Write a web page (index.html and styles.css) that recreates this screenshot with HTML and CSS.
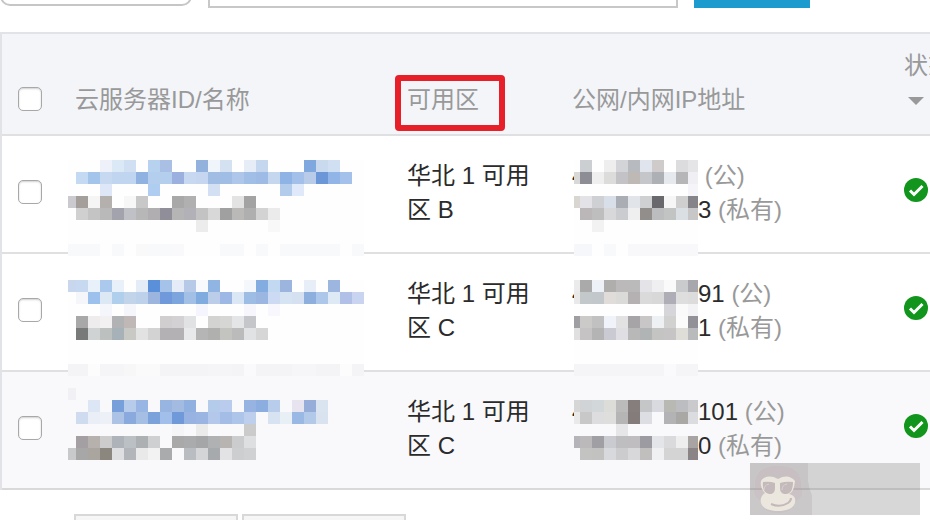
FILE: index.html
```html
<!DOCTYPE html>
<html lang="zh-CN">
<head>
    <meta charset="UTF-8">
    <title>云服务器</title>
    <link rel="stylesheet" href="styles.css">
</head>
<body>

<form class="toolbar">
    <select class="filter" aria-label="筛选"></select>
    <input class="search" type="text" aria-label="搜索">
    <button class="search-btn" type="button" aria-label="搜索"></button>
</form>

<div class="table-wrap">
    <table class="servers">
        <colgroup>
            <col class="col-check">
            <col class="col-name">
            <col class="col-zone">
            <col class="col-ip">
            <col>
        </colgroup>
        <thead>
            <tr>
                <th><input type="checkbox" aria-label="全选"></th>
                <th>云服务器ID/名称</th>
                <th>可用区<span class="highlight"></span></th>
                <th>公网/内网IP地址</th>
                <th>状态<span class="caret"></span></th>
            </tr>
        </thead>
        <tbody>
            <tr>
                <td><input type="checkbox" aria-label="选择"></td>
                <td><svg class="mosaic" data-mosaic="name1"></svg></td>
                <td>华北 1 可用区 B</td>
                <td>
                    <svg class="mosaic" data-mosaic="ip1"></svg>
                    <div><span class="masked">4</span> <span class="kind">(公)</span></div>
                    <div><span class="masked"></span>3 <span class="kind">(私有)</span></div>
                </td>
                <td><svg class="ok" viewBox="0 0 24 24"><circle cx="12" cy="12" r="12"/><path d="M6 12.5l4 4 8.500-8.500"/></svg></td>
            </tr>
            <tr>
                <td><input type="checkbox" aria-label="选择"></td>
                <td><svg class="mosaic" data-mosaic="name2"></svg></td>
                <td>华北 1 可用区 C</td>
                <td>
                    <svg class="mosaic" data-mosaic="ip2"></svg>
                    <div><span class="masked">4</span>91 <span class="kind">(公)</span></div>
                    <div><span class="masked"></span>1 <span class="kind">(私有)</span></div>
                </td>
                <td><svg class="ok" viewBox="0 0 24 24"><circle cx="12" cy="12" r="12"/><path d="M6 12.5l4 4 8.500-8.500"/></svg></td>
            </tr>
            <tr class="hover">
                <td><input type="checkbox" aria-label="选择"></td>
                <td><svg class="mosaic" data-mosaic="name3"></svg></td>
                <td>华北 1 可用区 C</td>
                <td>
                    <svg class="mosaic" data-mosaic="ip3"></svg>
                    <div><span class="masked">4</span>101 <span class="kind">(公)</span></div>
                    <div><span class="masked"></span>0 <span class="kind">(私有)</span></div>
                </td>
                <td><svg class="ok" viewBox="0 0 24 24"><circle cx="12" cy="12" r="12"/><path d="M6 12.5l4 4 8.500-8.500"/></svg></td>
            </tr>
        </tbody>
    </table>
</div>

<div class="actions">
    <button type="button" aria-label="操作一"></button>
    <button type="button" aria-label="操作二"></button>
</div>

<div class="watermark">
    <svg viewBox="0 0 62 52">
        <path class="wm-bg" d="M0 0h58v18q1 8 4 14v20H0z"/>
        <path class="wm-head" d="M5 24C5 8 14 3 28 3s24 5 23 21c3 6 0 12-5 14-3 8-8 12-18 12s-15-4-17-12c-6-3-8-9-6-14z"/>
        <path class="wm-face" d="M11 18c3-5 10-6 17-2 7-4 13-3 17 2l-1 6c-1 4-3 6-5 7 5 1 7 4 6 9-2 6-9 8-17 8s-15-2-17-8c-1-5 1-8 4-10-3-3-5-8-4-12z"/>
        <path class="wm-glass" d="M13 19q7-1 12 1v5c0 4-2 6-5 6-5 0-8-5-7-12zM30 20q6-2 13-1c0 7-2 12-7 12-4 0-6-2-6-6z"/>
        <path class="wm-glint" d="M14 27q0-5 5-6M32 27q0-5 5-6"/>
        <path class="wm-smile" d="M21 41q9 4 17-1 3-2 3-5"/>
    </svg>
</div>

<script src="mosaic.js"></script>
</body>
</html>
```
FILE: styles.css
```css
* {
    box-sizing: border-box;
}

html {
    overflow: hidden;
}

body {
    margin: 0;
    background-color: white;
    color: #2b2b2b;
    font: 24px/34px "Liberation Sans", Arial, "Noto Sans CJK SC", sans-serif;
}

/* search bar */
.toolbar {
    display: flex;
    align-items: flex-end;
    gap: 16px;
    height: 32px;
    padding: 0 0 24px;
}

.toolbar > * {
    flex: none;
    height: 56px;
}

.filter {
    width: 192px;
    margin-bottom: 2px;
    appearance: none;
    background-color: white;
    border: 2px solid #c6c6c6;
    border-radius: 10px;
}

.search {
    width: 470px;
    border: 2px solid #c8c8c8;
}

.search-btn {
    width: 116px;
    border: 0;
    background-color: #1b9bce;
}

/* server table */
.table-wrap {
    overflow: hidden;
}

.servers {
    width: 118%;
    table-layout: fixed;
    border-collapse: separate;
    border-spacing: 0;
    border-left: 2px solid #e2e3e6;
}

.col-check {
    width: 57px;
}

.col-name {
    width: 332px;
}

.col-zone {
    width: 165px;
}

.col-ip {
    width: 332px;
}

th, td {
    position: relative;
    padding: 23px 16px 25px;
    border-bottom: 2px solid #e0e0e3;
    text-align: left;
}

th {
    padding: 15px 16px 17px;
    border-top: 2px solid #e2e3e6;
    background-color: #f3f5f9;
    color: #999;
    font-weight: normal;
    vertical-align: bottom;
}

.hover td {
    background-color: #f9f9fb;
    border-color: #d9d9da;
}

.servers input {
    display: block;
    width: 24px;
    height: 24px;
    margin: 4px 0 6px;
    appearance: none;
    background-color: white;
    border: 1px solid #a8a8a8;
    border-radius: 5px;
    box-shadow: inset 0 1px 2px #d0d0d0;
}

.highlight {
    position: absolute;
    top: 41px;
    left: 4px;
    width: 110px;
    height: 56px;
    border: 6px solid #e71f29;
    border-radius: 4px;
}

.caret {
    display: block;
    width: 16px;
    height: 8px;
    margin: 14px 4px 12px;
    background-color: #999;
    clip-path: polygon(0 0, 100% 0, 50% 100%);
}

.kind {
    color: #999;
}

.masked {
    display: inline-block;
    width: 126px;
}

.mosaic {
    position: absolute;
    z-index: 1;
    shape-rendering: crispEdges;
}

.ok {
    display: block;
    width: 24px;
    height: 24px;
    margin-bottom: 6px;
}

.ok circle {
    fill: #12951c;
}

.ok path {
    fill: none;
    stroke: white;
    stroke-width: 3;
}

.actions {
    display: flex;
    gap: 4px;
    padding: 24px 74px 0;
}

.actions button {
    width: 164px;
    height: 48px;
    background-color: #f6f6f6;
    border: 2px solid #d8d8d8;
}

.watermark {
    position: fixed;
    z-index: 2;
    right: 10px;
    bottom: 5px;
    width: 170px;
    height: 52px;
    background-color: rgba(138, 138, 138, .34);
}

.watermark svg {
    display: block;
    width: 62px;
    height: 52px;
}

.wm-bg {
    fill: rgba(150, 135, 138, .18);
}

.wm-head {
    fill: rgba(190, 150, 155, .12);
}

.wm-face {
    fill: #ebe7de;
}

.wm-glass {
    fill: #c4babb;
}

.wm-smile, .wm-glint {
    fill: none;
    stroke: #c4b9b8;
    stroke-width: 2;
}

.wm-glint {
    stroke: #d8d0ce;
    stroke-width: 1;
}
```
FILE: mosaic.js
```js
// Pixelated blocks over private data. One string per 12px line, one colour per cell, "-" is empty.
const CELL = 12;

const mosaics = {
    name1: {top: 24, left: 9, cut: 4, width: 296, back: '#fefefe', rows: [
        '- - - eef1fa dbe8f5 d0dff2 - b6d2ef a9c0e4 - - 92b1dd f0f4fb d3e1f1 - e6edf7 c5d7ee - - - 7ea8de c9daee d0e0f2',
        '- c4daf2 a3c5ec c6d9f0 c0d5f0 c0d5f0 8fb2e0 b4cfee b4cfee 9bb0de c8d8f1 c6d6f0 a2bde3 9fbde5 adc6ea a0bee6 9dbbe4 c5d7ef 8fb3e4 a3c0ea b8cce9 6b97d8 90b5e6 a3c1ea',
        '- - - dee7f7 - - - afcdf0 - - - - d3dff2 - - - - - b4ccec dfe9f9',
        'cbcbcf a59f9c f6f5f6 b4b0ad - f7f7f7 c8c8c8 - - a8a8a8 b0b0b0 - - - e3e3e3 a3a3a3',
        '- d0d0d0 c4c4c5 b9b9b9 a2a3ad c0c1c7 b7b7b8 b0aeb0 908f99 b5b5b5 b1b1b7 c3c3c3 d8d8d8 a0a0a0 bab9b7 afafaf d3d3d3 ebebeb',
        '- - - - - - - - - - - ececec - - - - - f8f8f8',
        '-',
        'f7f9fa f7f9fa f7f9fa - f8f9fa - f9f9fa f8f9fa f8f9fa f9f9fb - - - f8f9fa f8f9fa - f8f9fa - f8f9fa f8f9fa f8f9fa f8f9fa f8f9fa - f8f9fa'
    ]},
    name2: {top: 26, left: 9, cut: 4, width: 296, back: '#fefefe', rows: [
        'c8d6ee c7d9f1 e8f1fa aac9ec e8f0f9 - e4edf7 5a90d9 a5c2e9 e5ecf8 b6c9e7 f7f9fd 90b5e3 - - f4f7fb 83ade1 c3d9f1 9bb5df - e8eef7 - 9db6e0',
        '- f5f6fa 9bc1ec dce9f4 b0cfec c1d4ea bed1ea 9bb5df 6f99da 7ca4dd a2c0e5 80abdf bccdea 9db8e4 dbe7f5 9ebde5 9cb6e2 cddaf3 d5e3f3 d5e0f1 8cafde adc7ea dee9f6 b0c0e7 c8d4f0',
        '- - - f5f6fc - f5f6fc - - - - - f5f6fd - - - f6f6fc - f7f7fd',
        '- a8a8a8 eeecec f2f0f1 b0b2b4 c0b8b6 - - d0cecf d3d1d3 e1e2e4 - d3d3d1 d6d7d5 e4e5e6 c4c6ca',
        '- 787979 cfd3d4 bcc0bf a6b1b8 c8c8c5 e1e2e1 d3d3d3 b3b1b3 b3b1b3 e8e9ea b5b5b5 b0b0ae c3c3c0 bbbbbb e0e2e4 d6d6d6',
        '-',
        '-',
        'f4f4f6 f4f4f6 fcfcfc f5f5f7 f5f5f7 f7f7f8 fafafb fafafb f4f4f6 f4f4f6 f4f4f6 f4f4f6 f5f5f7 f5f5f7 f4f4f6 fafafc f4f4f6 f4f4f6 f4f4f6 f6f6f8 f6f6f8 f4f4f6 f4f4f6 fcfcfc f4f4f6'
    ]},
    name3: {top: 16, left: 9, cut: 4, width: 296, back: '#f9f9fb', rows: [
        'f1f1f5',
        '- - dce6f4 - 779fda b7cbea 99b5e3 - 98b5e2 a4bbe1 90b0df - b5cbec bacced - 96b3e1 8baddf b8ccec - e7e4f0 96add9 dae4f1',
        '- cfdcf0 e9eef7 edf0f6 adc3e6 8aaadd a5bfe4 7ca2dc a2beea 6f99d9 98b3e1 9bb5e2 b3c8ea a4bde6 adc5e9 bdcfec - d8e3f2 e8eff5 9ab8e4 b3c9ea d9e3f0',
        '- - - - - - - - - f5f5f7 - ebebec - - - cbcbcc',
        '- a39fa2 b6b1ac cccccc adb3b9 bbc0c5 adb0b3 ced0d1 - a9a9a9 a9abac a4a6a8 b0b1b2 b8b4b2 cbccce dddfe1',
        'c8c9ca a8a7a8 aaa59e 8b867e dddfe1 b2b6ba e9e9ea f2f2f2 aaabad - b9bdc2 d3d5d7 a7aaac e3e3e5 ccced0 d0d1d2'
    ]},
    ip1: {top: 24, left: 18, cut: 6, width: 124, back: '#fefefe', rows: [
        '- cbcfd2 - eeeeef d3d4d7 b7bbbf e0e4ec cecbca - dcdcde e5e5e7',
        'd8d8d6 8d8e95 efefef dcdcdb c3c3c7 bfb9b5 c4c6ca adb0b5 e6eaee b6b6b8 efeff4',
        '- - - - - - - - - - f5f5f9',
        'd9d5d1 e2e2e7 cfd0d4 d9dfe9 abadb4 e1e5e9 cfd0d2 68686d f6f6f6 cfcfd0 858589',
        '- bbb7b8 bebebf d8d8da cbcccf efeff0 928e8b bbbdbf c1c4c3 d9dfe2 c7c7c8',
        '- - f2f2f3',
        '-',
        'f6f7fa f6f7fa - f8f9fa - f8f8fa f8f8fa f8f8fa f8f8fa f8f8fa f8f8fa'
    ]},
    ip2: {top: 26, left: 18, cut: 6, width: 124, back: '#fefefe', rows: [
        'ebebec aaaaaa eef2f8 b0aead bbb9b9 bababb e4e4e8 efeff1 fafafa c9cbcd a8a7ad',
        'e9e9e9 c3c8cb c2c7cb e0dcd9 dadad9 b5b1b3 dadadb d9d8d9 afaeb7 dedede dcdcdc',
        '- - - - - - - - d6d6da fafafa f3f3f5',
        '9f9fa3 cbcac9 c1c1c1 f0f3fa e2e2e3 a6a4a7 c9c6c7 eef1f4 d1d1d0 fbfbfb 929198',
        'e0e0e1 c5c3c3 b4b4b4 cacbd2 dedee3 b9b8b8 b1b4b4 c4c4c3 c6c4c5 dfddd8 b9babc',
        '-',
        '-',
        'f5f5f7 f5f5f7 f5f5f7 f5f5f7 f5f5f7 f5f5f7 f5f5f7 f5f5f7 fafafc f5f5f7 f5f5f7'
    ]},
    ip3: {top: 16, left: 18, cut: 6, width: 124, back: '#f9f9fb', rows: [
        '-',
        'd6d6d6 d0d4d7 d2d7da dcdcd9 babbba 857e7d c5c6c8 d9dadf b9b9b4 bcbdc1 cacacc',
        'e9e9ea c7c8c7 dddde0 dededd b5b5b6 847c7b dcdee3 - b3b3b5 a9a8a5 dbdce0',
        '- - - - e6e6e9',
        'b4b4b9 bbb9ba 9f9fa4 cacbd1 bebec0 bfbdbf 9b9ba1 e3e5e9 dadadd efeeef a8a4a4',
        '- c3c3c2 c2c2c0 d8d9dd cccccf d8d8da c0bfbe f0f0f3 d4d4d4 d4d4d5 8b8486'
    ]}
};

function rect(x, y, width, height, fill) {
    return `<rect x="${x}" y="${y}" width="${width}" height="${height}" fill="${fill}"/>`;
}

document.querySelectorAll('.mosaic').forEach((svg) => {
    const m = mosaics[svg.dataset.mosaic];
    const height = m.rows.length * CELL;
    let shapes = rect(0, 0, m.width + m.cut, height, m.back);

    m.rows.forEach((line, row) => {
        line.split(' ').forEach((color, col) => {
            if (color !== '-') {
                shapes += rect(col * CELL, row * CELL, CELL, CELL, '#' + color);
            }
        });
    });

    svg.setAttribute('viewBox', `${m.cut} 0 ${m.width} ${height}`);
    svg.setAttribute('width', m.width);
    svg.setAttribute('height', height);
    svg.style.top = m.top + 'px';
    svg.style.left = m.left + 'px';
    svg.innerHTML = shapes;
});
```
